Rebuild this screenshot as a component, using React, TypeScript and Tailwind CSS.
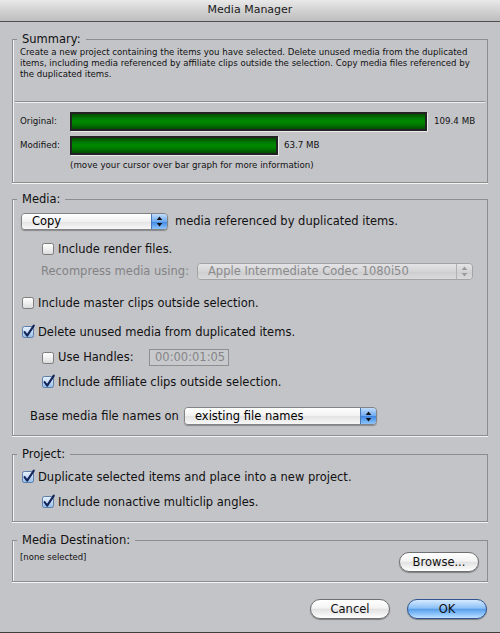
import React from "react";

const BG = "bg-[#c3c4c8]";

function CheckBox({ checked }: { checked: boolean }) {
  const id = checked ? "cbOn" : "cbOff";
  return (
    <svg width="14" height="14" viewBox="0 0 14 14" className="shrink-0 overflow-visible">
      <defs>
        <linearGradient id={id} x1="0" y1="0" x2="0" y2="1">
          {checked ? (
            <>
              <stop offset="0" stopColor="#e9f2fc" />
              <stop offset="0.5" stopColor="#c4dbf4" />
              <stop offset="1" stopColor="#8fbcea" />
            </>
          ) : (
            <>
              <stop offset="0" stopColor="#ffffff" />
              <stop offset="0.5" stopColor="#f0f0f0" />
              <stop offset="1" stopColor="#d9d9d9" />
            </>
          )}
        </linearGradient>
      </defs>
      <rect x="1.5" y="1.5" width="11" height="11" rx="1.8" fill={`url(#${id})`} stroke={checked ? "#5c7ea8" : "#7d7d7d"} />
      {checked && (
        <path d="M3.6 7.2 L6.2 10.6 L12.8 0.6" stroke="#13255a" strokeWidth="2.1" fill="none" strokeLinecap="round" strokeLinejoin="round" />
      )}
    </svg>
  );
}

function Arrows({ color }: { color: string }) {
  return (
    <svg width="7" height="11" viewBox="0 0 7 11">
      <path d="M3.5 0.5 L6.3 4 L0.7 4 Z" fill={color} />
      <path d="M3.5 10.5 L6.3 7 L0.7 7 Z" fill={color} />
    </svg>
  );
}

function Popup({ label, width, height, disabled }: { label: string; width: string; height: string; disabled?: boolean }) {
  return (
    <div
      className={`${width} ${height} flex shrink-0 rounded-[4px] border ${
        disabled ? "border-[#a3a3a3]" : "border-[#838383] shadow-[0_1px_1px_rgba(0,0,0,0.3)]"
      } overflow-hidden`}
    >
      <div
        className={`flex-1 flex items-center pl-[10px] ${
          disabled
            ? "bg-[linear-gradient(to_bottom,#e4e4e6,#d4d4d6_50%,#cdcdcf_51%,#dadadc)] text-[#8a8a8c]"
            : "bg-[linear-gradient(to_bottom,#ffffff,#f1f1f1_50%,#e3e3e3_51%,#f7f7f7)] text-black"
        }`}
      >
        {label}
      </div>
      <div
        className={`w-[16px] flex items-center justify-center border-l ${
          disabled
            ? "border-[#b0b0b0] bg-[linear-gradient(to_bottom,#e4e4e6,#d4d4d6_50%,#cdcdcf_51%,#dadadc)]"
            : "border-[#4a77b8] bg-[linear-gradient(to_bottom,#bfdcfb,#6eaaef_50%,#3d86e3_51%,#8ec6fb)]"
        }`}
      >
        <Arrows color={disabled ? "#9a9a9a" : "#111"} />
      </div>
    </div>
  );
}

function Group({ title, children, className = "" }: { title: string; children: React.ReactNode; className?: string }) {
  return (
    <div className={`mx-[12px] flex flex-col border border-[#8d8d8f] shadow-[inset_1px_0_0_#f4f4f4,0_1px_0_#f4f4f4] ${className}`}>
      <div className={`-mt-[9px] ml-[4px] self-start px-[5px] leading-[16px] text-[11.5px] ${BG}`}>{title}</div>
      {children}
    </div>
  );
}

function Bar({ width }: { width: string }) {
  return (
    <div className={`${width} h-[19px] border-2 border-[#222] shadow-[1px_1px_0_#ececec] bg-[linear-gradient(to_bottom,#004d00,#007a00_30%,#008a00_50%,#007a00_70%,#004d00)]`} />
  );
}

function AquaButton({ label, primary, width, className = "" }: { label: string; primary?: boolean; width: string; className?: string }) {
  return (
    <div
      className={`${width} h-[20px] rounded-full border flex items-center justify-center text-[11.5px] shadow-[0_1px_1px_rgba(0,0,0,0.35)] ${
        primary
          ? "border-[#2f5490] bg-[linear-gradient(to_bottom,#d6eaff,#8cc1f6_45%,#5a9fec_52%,#8fc6fb_80%,#c4e2ff)]"
          : "border-[#6f6f6f] bg-[linear-gradient(to_bottom,#ffffff,#f3f3f3_45%,#e2e2e2_52%,#f2f2f2_80%,#ffffff)]"
      } ${className}`}
    >
      {label}
    </div>
  );
}

function CheckRow({ checked, label, className = "" }: { checked: boolean; label: string; className?: string }) {
  return (
    <div className={`flex items-center h-[16px] gap-[3px] ${className}`}>
      <CheckBox checked={checked} />
      <span className="whitespace-nowrap leading-[16px]">{label}</span>
    </div>
  );
}

export default function App() {
  return (
    <div className={`w-[500px] h-[633px] ${BG} flex flex-col text-[#111] text-[11.5px] font-['DejaVu_Sans',sans-serif] overflow-hidden`}>
      {/* Title bar */}
      <div className="h-[22px] shrink-0 flex items-center justify-center border-b border-[#4f4f4f] bg-[linear-gradient(to_bottom,#e9e9e9,#d2d2d2_50%,#bdbdbd)] text-[11px] text-[#1a1a1a]">
        Media Manager
      </div>

      {/* Summary */}
      <Group title="Summary:" className="mt-[17px]">
        <div className="pl-[7px] text-[8.6px] leading-[11px] whitespace-nowrap">
          <div>Create a new project containing the items you have selected. Delete unused media from the duplicated</div>
          <div>items, including media referenced by affiliate clips outside the selection. Copy media files referenced by</div>
          <div>the duplicated items.</div>
        </div>
        <div className="mt-[21px] mx-[2px] h-[2px] border-t border-[#8d8d8f] border-b border-b-[#f0f0f0]" />
        <div className="mt-[9px] flex items-center h-[19px] pl-[7px] text-[8.7px]">
          <span className="w-[50px]">Original:</span>
          <Bar width="w-[357px]" />
          <span className="ml-[7px]">109.4 MB</span>
        </div>
        <div className="mt-[5px] flex items-center h-[19px] pl-[7px] text-[8.7px]">
          <span className="w-[50px]">Modified:</span>
          <Bar width="w-[208px]" />
          <span className="ml-[6px]">63.7 MB</span>
        </div>
        <div className="mt-[4px] pl-[57px] text-[8.7px] leading-[12px]">(move your cursor over bar graph for more information)</div>
        <div className="h-[11px]" />
      </Group>

      {/* Media */}
      <Group title="Media:" className="mt-[16px]">
        <div className="pl-[8px] flex flex-col">
          <div className="mt-[6px] flex items-center gap-[7px]">
            <Popup label="Copy" width="w-[147px]" height="h-[17px]" />
            <span className="whitespace-nowrap">media referenced by duplicated items.</span>
          </div>
          <CheckRow checked={false} label="Include render files." className="mt-[11px] ml-[20px]" />
          <div className="mt-[6px] ml-[20px] flex items-center h-[17px]">
            <span className="w-[156px] text-[#828284] whitespace-nowrap">Recompress media using:</span>
            <Popup label="Apple Intermediate Codec 1080i50" width="w-[276px]" height="h-[17px]" disabled />
          </div>
          <CheckRow checked={false} label="Include master clips outside selection." className="mt-[15px]" />
          <CheckRow checked={true} label="Delete unused media from duplicated items." className="mt-[13px]" />
          <div className="mt-[9px] ml-[20px] flex items-center h-[17px] gap-[3px]">
            <CheckBox checked={false} />
            <span className="w-[88px] whitespace-nowrap">Use Handles:</span>
            <div className="w-[80px] h-[17px] border border-[#8f8f91] bg-[#c8c9cc] flex items-center pl-[5px] text-[#858587]">00:00:01:05</div>
          </div>
          <CheckRow checked={true} label="Include affiliate clips outside selection." className="mt-[8px] ml-[20px]" />
          <div className="mt-[17px] ml-[9px] flex items-center h-[18px]">
            <span className="w-[154px] whitespace-nowrap">Base media file names on</span>
            <Popup label="existing file names" width="w-[193px]" height="h-[18px]" />
          </div>
          <div className="h-[10px]" />
        </div>
      </Group>

      {/* Project */}
      <Group title="Project:" className="mt-[18px]">
        <div className="pl-[8px] flex flex-col">
          <CheckRow checked={true} label="Duplicate selected items and place into a new project." className="mt-[7px]" />
          <CheckRow checked={true} label="Include nonactive multiclip angles." className="mt-[9px] ml-[20px]" />
          <div className="h-[11px]" />
        </div>
      </Group>

      {/* Media Destination */}
      <Group title="Media Destination:" className="mt-[18px]">
        <div className="flex items-start justify-between pl-[7px] pr-[8px]">
          <span className="mt-[3px] text-[8.5px] leading-[12px]">[none selected]</span>
          <AquaButton label="Browse..." width="w-[80px]" className="mt-[4px]" />
        </div>
        <div className="h-[9px]" />
      </Group>

      {/* Buttons */}
      <div className="mt-[17px] flex justify-end gap-[17px] pr-[13px]">
        <AquaButton label="Cancel" width="w-[80px]" />
        <AquaButton label="OK" width="w-[80px]" primary />
      </div>

      <div className="mt-auto h-px bg-[#3e3e3e]" />
    </div>
  );
}
